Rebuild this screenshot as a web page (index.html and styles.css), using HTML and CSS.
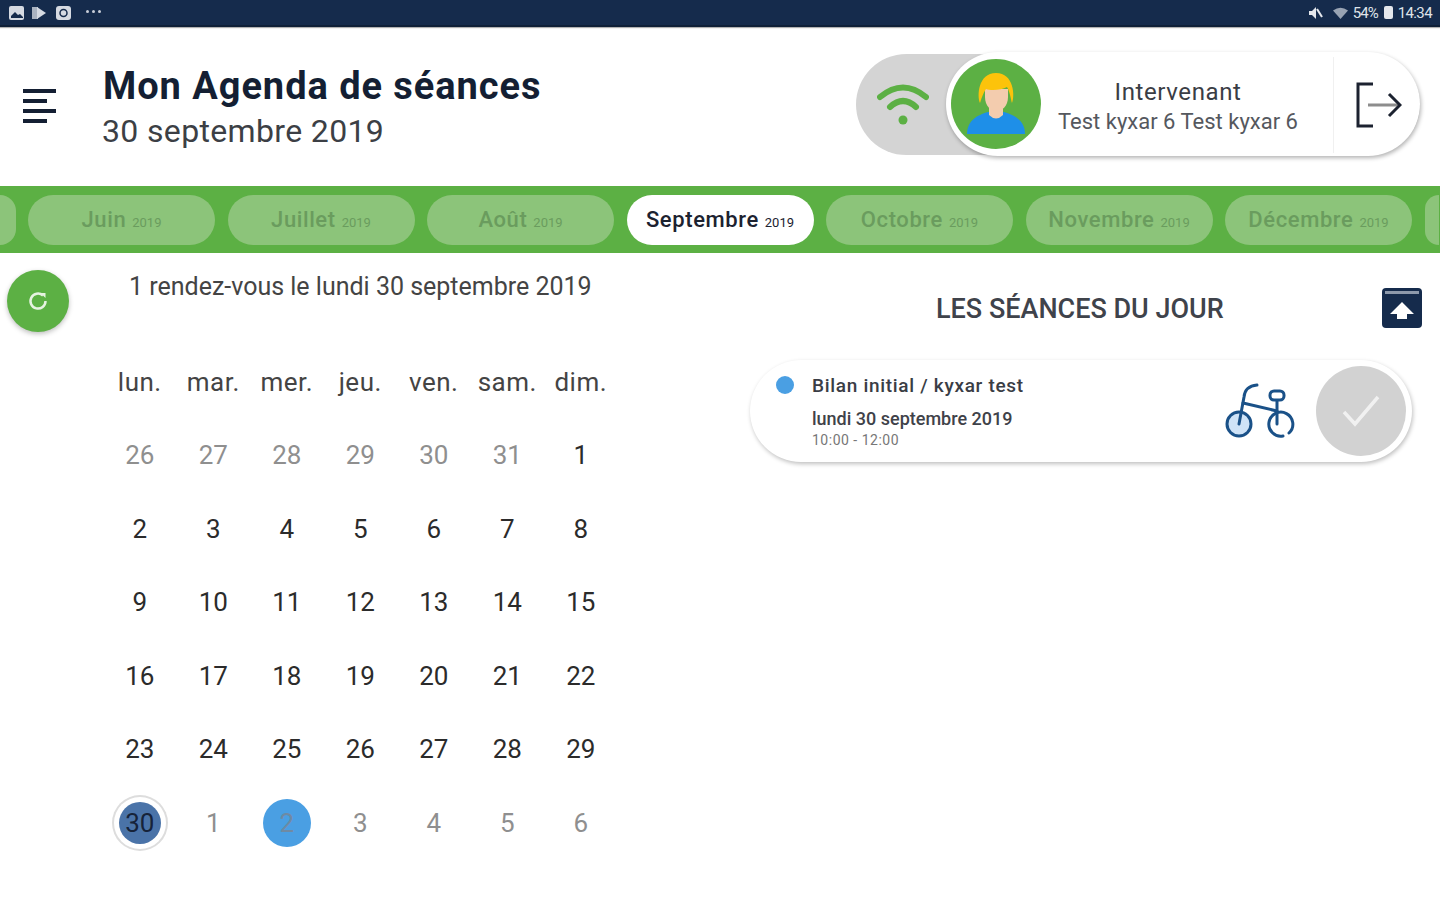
FILE: index.html
```html
<!DOCTYPE html>
<html lang="fr">
<head>
    <meta charset="UTF-8">
    <meta name="viewport" content="width=device-width, initial-scale=1.0">
    <title>Mon Agenda de séances</title>
    <link rel="stylesheet" href="styles.css">
</head>
<body>
    <div class="status-bar">
        <div class="status-left">
            <svg width="17" height="16" viewBox="0 0 17 16"><rect x="1" y="1" width="15" height="14" rx="2" fill="#d5dae2"/><path d="M3 11l4-4 3 3 2-1 3 3v1H3z" fill="#152b4c"/></svg>
            <svg class="status-play" width="16" height="14" viewBox="0 0 16 14"><rect x="1" y="1" width="6" height="12" fill="#aab3c0"/><path d="M6 1l9 6-9 6z" fill="#d5dae2"/></svg>
            <svg class="status-cam" width="17" height="17" viewBox="0 0 17 17"><rect x="1" y="2" width="15" height="14" rx="3" fill="#d5dae2"/><circle cx="8.500" cy="9" r="3.500" fill="none" stroke="#152b4c" stroke-width="1.500"/></svg>
            <span class="status-dots"><i></i><i></i><i></i></span>
        </div>
        <div class="status-right">
            <svg width="15" height="14" viewBox="0 0 15 14"><path d="M1 5h3l4-4v12l-4-4H1z" fill="#e4e7ec"/><path d="M9 3l5 8" stroke="#e4e7ec" stroke-width="2"/></svg>
            <svg class="status-wifi" width="15" height="12" viewBox="0 0 15 12"><path d="M0 3.500Q7.500-2 15 3.500L7.500 12z" fill="#98a3b3"/></svg>
            <span class="status-pct">54%</span>
            <span class="status-batt"></span>
            <span>14:34</span>
        </div>
    </div>

    <header class="header">
        <button class="menu-btn"><span></span><span></span><span></span><span></span></button>
        <div class="title-block">
            <h1>Mon Agenda de séances</h1>
            <div class="subtitle">30 septembre 2019</div>
        </div>
        <div class="profile">
            <div class="wifi-slot">
                <svg width="52" height="44" viewBox="0 0 52 44" fill="none" stroke="#5cb044" stroke-width="6" stroke-linecap="round"><path d="M3 15Q26-4 49 15"/><path d="M13 25Q26 13 39 25"/><circle cx="26" cy="38" r="4.500" fill="#5cb044" stroke="none"/></svg>
            </div>
            <div class="profile-card">
                <div class="avatar">
                    <svg width="90" height="90" viewBox="0 0 90 90"><circle cx="45" cy="45" r="45" fill="#5cb044"/><path d="M16 75c0-13 10-19 21-22h16c11 3 21 9 21 22z" fill="#1e8fe8"/><path d="M38 42h14v14q-7 7-14 0z" fill="#f3ccae"/><path d="M34 30h23v8c0 9-6 14-11.500 14S34 47 34 38z" fill="#f3ccae"/><path d="M29 44c-3-7-2-30 16-30s19 23 16 30c-1-3-2-11-5-16-5 3-16 4-21 2-3 4-5 11-6 14z" fill="#fcc30b"/></svg>
                </div>
                <div class="profile-text">
                    <div class="profile-role">Intervenant</div>
                    <div class="profile-name">Test kyxar 6 Test kyxar 6</div>
                </div>
                <div class="logout">
                    <svg width="46" height="46" viewBox="0 0 46 46" fill="none" stroke-width="3"><path d="M17 2H2v42h15" stroke="#1c2230"/><path d="M12 23h30" stroke="#8d8d8d"/><path d="M33 12l11 11-11 11" stroke="#1c2230"/></svg>
                </div>
            </div>
        </div>
    </header>

    <nav class="months">
        <a class="month edge-left"></a>
        <a class="month">Juin <small>2019</small></a>
        <a class="month">Juillet <small>2019</small></a>
        <a class="month">Août <small>2019</small></a>
        <a class="month active">Septembre <small>2019</small></a>
        <a class="month">Octobre <small>2019</small></a>
        <a class="month">Novembre <small>2019</small></a>
        <a class="month">Décembre <small>2019</small></a>
        <a class="month edge-right"></a>
    </nav>

    <main class="content">
        <section class="agenda">
            <div class="agenda-top">
                <button class="refresh">
                    <svg width="22" height="22" viewBox="0 0 22 22" fill="none" stroke="#e6f3e1" stroke-width="2.500"><path d="M16 5.500A7.500 7.500 0 1 0 18.500 11"/><path d="M13.500 3h5v5z" fill="#e6f3e1" stroke="none"/></svg>
                </button>
                <p class="agenda-count">1 rendez-vous le lundi 30 septembre 2019</p>
            </div>
            <div class="calendar">
                <div class="wd">lun.</div><div class="wd">mar.</div><div class="wd">mer.</div><div class="wd">jeu.</div><div class="wd">ven.</div><div class="wd">sam.</div><div class="wd">dim.</div>
                <div class="day out">26</div><div class="day out">27</div><div class="day out">28</div><div class="day out">29</div><div class="day out">30</div><div class="day out">31</div><div class="day">1</div>
                <div class="day">2</div><div class="day">3</div><div class="day">4</div><div class="day">5</div><div class="day">6</div><div class="day">7</div><div class="day">8</div>
                <div class="day">9</div><div class="day">10</div><div class="day">11</div><div class="day">12</div><div class="day">13</div><div class="day">14</div><div class="day">15</div>
                <div class="day">16</div><div class="day">17</div><div class="day">18</div><div class="day">19</div><div class="day">20</div><div class="day">21</div><div class="day">22</div>
                <div class="day">23</div><div class="day">24</div><div class="day">25</div><div class="day">26</div><div class="day">27</div><div class="day">28</div><div class="day">29</div>
                <div class="day"><span class="selected">30</span></div><div class="day out">1</div><div class="day"><span class="marked">2</span></div><div class="day out">3</div><div class="day out">4</div><div class="day out">5</div><div class="day out">6</div>
            </div>
        </section>

        <section class="sessions">
            <div class="sessions-head">
                <h2>LES SÉANCES DU JOUR</h2>
                <button class="upload">
                    <svg width="40" height="40" viewBox="0 0 40 40"><rect width="40" height="40" rx="4" fill="#152b4c"/><rect x="3" y="3" width="34" height="3" fill="#8d99ab"/><path d="M20 14l12 12h-7v5H15v-5H8z" fill="#fff"/></svg>
                </button>
            </div>
            <article class="session-card">
                <span class="session-dot"></span>
                <div class="session-info">
                    <div class="session-title">Bilan initial / kyxar test</div>
                    <div class="session-date">lundi 30 septembre 2019</div>
                    <div class="session-time">10:00 - 12:00</div>
                </div>
                <svg class="bike" width="70" height="56" viewBox="0 0 70 56" fill="none" stroke="#1a5188" stroke-width="3" stroke-linecap="round"><circle cx="14" cy="41" r="12" fill="#cfe3f7"/><path d="M58 53a12 12 0 1 1 6-3"/><path d="M14 41L19 14Q20 3 32 2"/><path d="M18 20L52 28"/><path d="M52 18V41"/><rect x="45" y="8" width="14" height="9" rx="4"/></svg>
                <div class="session-check">
                    <svg width="38" height="32" viewBox="0 0 38 32" fill="none" stroke="#f1f1f1" stroke-width="3.500"><path d="M2 17l11 12L36 2"/></svg>
                </div>
            </article>
        </section>
    </main>
</body>
</html>
```

FILE: styles.css
```css
:root {
    --navy: #152b4c;
    --green: #5cb044;
    --blue: #4a9fe3;
    --text-color: #2b2b2b;
}

* {
    margin: 0;
    padding: 0;
    box-sizing: border-box;
    font-family: 'Roboto', 'Liberation Sans', sans-serif;
}

body {
    width: 1440px;
    height: 900px;
    overflow: hidden;
    background-color: white;
    color: var(--text-color);
}

button {
    border: none;
    background: none;
}

.status-bar {
    display: flex;
    justify-content: space-between;
    align-items: center;
    height: 27px;
    padding: 0 8px;
    background-color: var(--navy);
    border-bottom: 2px solid #0f2038;
    box-shadow: 0 1px 1px rgba(0,0,0,0.3);
}

.status-left,
.status-right {
    display: flex;
    align-items: center;
}

.status-play {
    margin-left: 6px;
}

.status-cam {
    margin-left: 8px;
}

.status-dots {
    display: flex;
    gap: 3px;
    margin-left: 14px;
    margin-bottom: 2px;
}

.status-dots i {
    width: 3px;
    height: 3px;
    border-radius: 50%;
    background-color: #c8ced8;
}

.status-right {
    color: #dfe3e9;
    font-size: 15px;
    letter-spacing: -0.6px;
}

.status-wifi {
    margin-left: 10px;
}

.status-pct {
    margin-left: 5px;
    letter-spacing: -1px;
}

.status-batt {
    width: 9px;
    height: 13px;
    margin: 0 5px 0 6px;
    border-radius: 2px;
    background-color: #e4e7ec;
}

.header {
    display: flex;
    align-items: center;
    height: 159px;
    padding-left: 23px;
}

.menu-btn {
    display: flex;
    flex-direction: column;
    gap: 6px;
    width: 34px;
    margin-top: -2px;
}

.menu-btn span {
    display: block;
    height: 4px;
    width: 33px;
    background-color: #141f33;
}

.menu-btn span:nth-child(even) {
    width: 24px;
}

.title-block {
    margin-left: 46px;
    margin-top: 3px;
}

.title-block h1 {
    font-size: 38px;
    font-weight: 700;
    line-height: 46px;
    letter-spacing: 0.95px;
    color: #141f33;
}

.subtitle {
    margin-left: -1px;
    font-size: 32px;
    line-height: 44px;
    color: #3c3f45;
    letter-spacing: 0.35px;
}

.profile {
    display: flex;
    width: 564px;
    height: 101px;
    margin-left: auto;
    margin-right: 20px;
    margin-top: -5px;
    border-radius: 51px;
    background-color: #d4d4d4;
}

.wifi-slot {
    display: flex;
    align-items: center;
    justify-content: center;
    width: 90px;
    padding-left: 4px;
    flex-shrink: 0;
}

.profile-card {
    display: flex;
    align-items: center;
    flex: 1;
    height: 104px;
    margin-top: -2px;
    padding-left: 5px;
    border-radius: 52px;
    background-color: white;
    box-shadow: 1px 2px 4px rgba(0,0,0,0.3);
}

.avatar {
    width: 90px;
    height: 90px;
    flex-shrink: 0;
}

.profile-text {
    flex: 1;
    padding: 5px 18px 0 0;
    text-align: center;
}

.profile-role {
    font-size: 24px;
    line-height: 30px;
    letter-spacing: 0.6px;
    color: #3a3d45;
}

.profile-name {
    font-size: 22px;
    line-height: 29px;
    color: #55585e;
}

.logout {
    display: flex;
    align-items: center;
    justify-content: flex-end;
    width: 87px;
    height: 96px;
    padding-right: 18px;
    margin-top: 2px;
    border-left: 1px solid #f0f0f0;
}

.months {
    display: flex;
    align-items: center;
    gap: 12.5px;
    height: 67px;
    background-color: var(--green);
}

.month {
    display: flex;
    align-items: baseline;
    justify-content: center;
    gap: 6px;
    width: 187px;
    height: 50px;
    flex-shrink: 0;
    line-height: 50px;
    border-radius: 25px;
    background-color: #8cc47a;
    color: #6a9c5e;
    font-size: 22px;
    font-weight: 500;
    letter-spacing: 0.6px;
}

.month small {
    font-size: 13px;
    font-weight: 400;
    letter-spacing: 0;
}

.month.active {
    background-color: white;
    color: #1c2230;
}

.edge-left {
    width: 15.5px;
    border-radius: 0 25px 25px 0;
}

.edge-right {
    width: 14.5px;
    border-radius: 25px 0 0 25px;
}

.content {
    display: flex;
}

.agenda {
    width: 740px;
    flex-shrink: 0;
}

.agenda-top {
    display: flex;
    padding: 17px 0 0 7px;
}

.refresh {
    display: flex;
    align-items: center;
    justify-content: center;
    width: 62px;
    height: 62px;
    border-radius: 50%;
    background-color: var(--green);
    box-shadow: 0 2px 5px rgba(0,0,0,0.25);
}

.agenda-count {
    margin-left: 60px;
    font-size: 25px;
    line-height: 34px;
    color: #444;
}

.calendar {
    display: grid;
    grid-template-columns: repeat(7, 73.5px);
    grid-auto-rows: 73.5px;
    margin: 13px 0 0 103px;
}

.wd,
.day {
    display: flex;
    align-items: center;
    justify-content: center;
    font-size: 26px;
}

.wd {
    color: #444;
    letter-spacing: 0.5px;
}

.day.out {
    color: #8f8f8f;
}

.selected {
    display: flex;
    align-items: center;
    justify-content: center;
    width: 42px;
    height: 42px;
    border-radius: 50%;
    background-color: #4a73a8;
    color: #16233a;
    box-shadow: 0 0 0 5px white, 0 0 0 7px #ddd;
}

.marked {
    display: flex;
    align-items: center;
    justify-content: center;
    width: 48px;
    height: 48px;
    border-radius: 50%;
    background-color: var(--blue);
    color: #6f8aa3;
}

.sessions {
    flex: 1;
    padding: 35px 18px 0 10px;
}

.sessions-head {
    display: flex;
    align-items: center;
    height: 40px;
}

.sessions-head h2 {
    flex: 1;
    padding: 2px 0 0 186px;
    font-size: 27px;
    font-weight: 500;
    color: #3f434b;
}

.upload {
    width: 40px;
    height: 40px;
}

.session-card {
    display: flex;
    align-items: center;
    width: 662px;
    height: 102px;
    margin-top: 32px;
    padding: 0 6px 0 26px;
    border-radius: 51px;
    background-color: white;
    box-shadow: 1px 2px 4px rgba(0,0,0,0.25);
}

.session-dot {
    width: 18px;
    height: 18px;
    margin-bottom: 52px;
    border-radius: 50%;
    background-color: var(--blue);
}

.session-info {
    flex: 1;
    margin-left: 18px;
}

.session-title {
    font-size: 19px;
    font-weight: 500;
    line-height: 28px;
    letter-spacing: 0.7px;
    color: #3a3d45;
}

.session-date {
    margin-top: 8px;
    font-size: 18px;
    font-weight: 500;
    line-height: 22px;
    color: #3f4249;
}

.session-time {
    font-size: 14px;
    line-height: 20px;
    letter-spacing: 0.5px;
    color: #777;
}

.bike {
    margin-right: 21px;
}

.session-check {
    display: flex;
    align-items: center;
    justify-content: center;
    width: 90px;
    height: 90px;
    border-radius: 50%;
    background-color: #d2d2d2;
}
```
